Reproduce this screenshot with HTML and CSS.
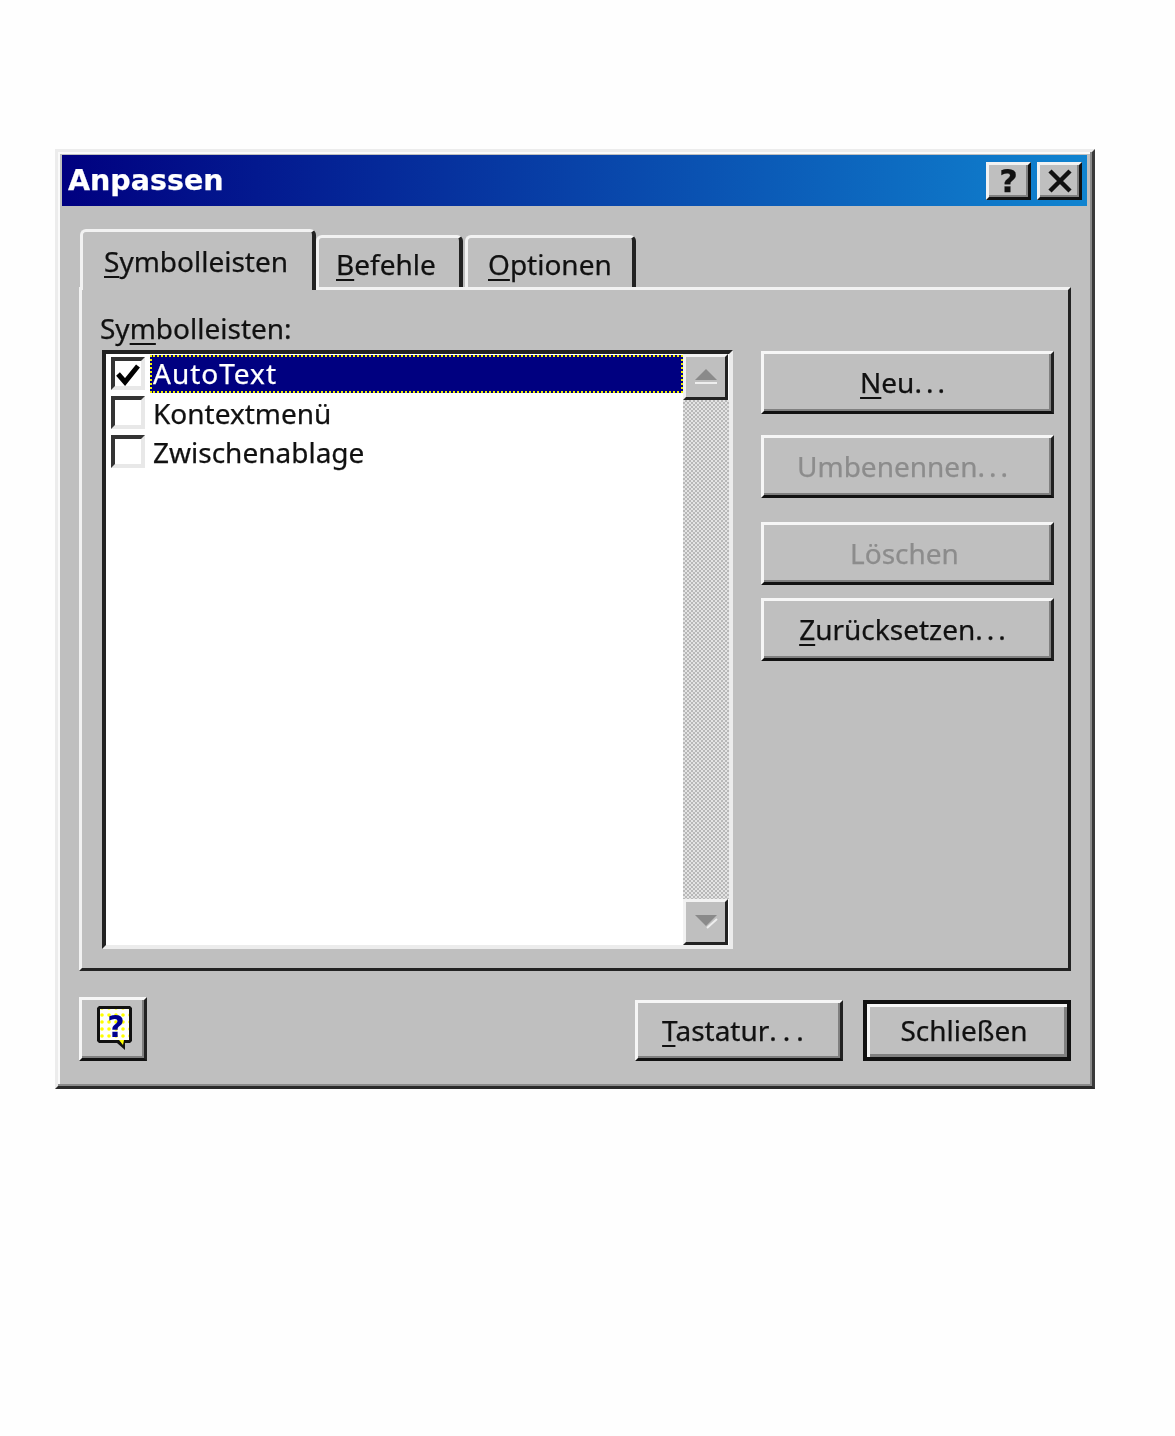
FILE: index.html
```html
<!DOCTYPE html>
<html lang="de">
<head>
<meta charset="utf-8">
<title>Anpassen</title>
<link rel="stylesheet" href="styles.css">
</head>
<body>
<div class="dialog">
  <header class="titlebar">
    <span class="title">Anpassen</span>
    <div class="caption-buttons">
      <button class="caption-btn help-glyph">?</button>
      <button class="caption-btn close-btn">
        <svg width="28" height="24" viewBox="0 0 28 24"><path d="M4 2 L24 22 M24 2 L4 22" stroke="#111" stroke-width="4.5" fill="none"/></svg>
      </button>
    </div>
  </header>
  <div class="content">
    <nav class="tabs">
      <div class="tab tab-active"><span><u>S</u>ymbolleisten</span></div>
      <div class="tab tab-befehle"><span><u>B</u>efehle</span></div>
      <div class="tab tab-optionen"><span><u>O</u>ptionen</span></div>
    </nav>
    <section class="panel">
      <div class="list-col">
        <label class="list-label">Sy<u>m</u>bolleisten:</label>
        <div class="listbox">
          <div class="items">
            <div class="item">
              <span class="check">
                <svg width="26" height="24" viewBox="0 0 26 24"><path d="M3 12 L10 20 L23 4" stroke="#000" stroke-width="5" fill="none"/></svg>
              </span>
              <span class="item-text selected">AutoText</span>
            </div>
            <div class="item"><span class="check"></span><span class="item-text">Kontextmenü</span></div>
            <div class="item"><span class="check"></span><span class="item-text">Zwischenablage</span></div>
          </div>
          <div class="scrollbar">
            <div class="scroll-btn">
              <svg width="30" height="20" viewBox="0 0 30 20"><path d="M15 2 L26 13 H4 Z" fill="#8a8a8a"/><path d="M4 16 H26" stroke="#eee" stroke-width="2"/></svg>
            </div>
            <div class="scroll-track"></div>
            <div class="scroll-btn">
              <svg width="30" height="20" viewBox="0 0 30 20"><path d="M4 3 H26 L15 14 Z" fill="#8a8a8a"/><path d="M16 16 L26 7" stroke="#eee" stroke-width="2"/></svg>
            </div>
          </div>
        </div>
      </div>
      <div class="side-buttons">
        <button class="btn side-neu"><u>N</u>eu<span class="dots">...</span></button>
        <button class="btn side-umb" disabled>Umbenennen<span class="dots">...</span></button>
        <button class="btn side-los" disabled>Löschen</button>
        <button class="btn side-zur"><u>Z</u>urücksetzen<span class="dots">...</span></button>
      </div>
    </section>
    <footer class="footer">
      <button class="btn help-btn">
        <svg width="42" height="48" viewBox="0 0 42 48">
          <defs>
            <pattern id="helpdots" width="7" height="7" patternUnits="userSpaceOnUse">
              <rect width="7" height="7" fill="#ffffff"/>
              <circle cx="3" cy="3" r="1.8" fill="#ffff00"/>
            </pattern>
          </defs>
          <path d="M7 1 H38 L40 3 V36 L38 38 H33 L33 45 L25 38 H7 L5 36 V3 Z" fill="#111"/>
          <rect x="8" y="4" width="29" height="31" fill="url(#helpdots)"/>
          <path d="M27 35 H32 L31 40 Z" fill="#ffff00"/>
          <text x="24" y="32" class="help-q">?</text>
        </svg>
      </button>
      <button class="btn foot-btn tastatur"><u>T</u>astatur<span class="dots wide">...</span></button>
      <button class="btn foot-btn default-btn">Schließen</button>
    </footer>
  </div>
</div>
</body>
</html>
```
FILE: styles.css
```css
* { box-sizing: border-box; }
html, body { margin: 0; padding: 0; }
body {
  background: #fefefe;
  padding: 149px 0 0 55px;
  font-family: "Noto Sans", "Liberation Sans", sans-serif;
  font-size: 28px;
  color: #111;
  -webkit-text-stroke: 0.25px currentColor;
}
u { text-underline-offset: 4px; text-decoration-thickness: 2px; }
.dots { letter-spacing: 4px; }
.dots.wide { letter-spacing: 6px; }
.dialog {
  width: 1040px;
  height: 940px;
  background: #bfbfbf;
  border: 3px solid;
  border-color: #ececec #3a3a3a #2a2a2a #ececec;
  padding: 3px 5px 0 4px;
  box-shadow: inset -2px -2px 0 #8a8a8a, inset 2px 2px 0 #fafafa;
  filter: blur(0.6px);
}
.titlebar {
  height: 51px;
  background: linear-gradient(90deg, #000080 0%, #1084d0 100%);
  display: flex;
  align-items: center;
  justify-content: space-between;
  padding: 0 5px 0 6px;
}
.title {
  color: #fff;
  font-family: "DejaVu Sans", sans-serif;
  font-weight: 700;
  font-size: 28.5px;
  line-height: 51px;
}
.caption-buttons { display: flex; gap: 6px; }
.caption-btn {
  width: 45px;
  height: 38px;
  padding: 0;
  background: #bfbfbf;
  border: 3px solid;
  border-color: #f2f2f2 #111 #111 #f2f2f2;
  box-shadow: inset -2px -2px 0 #808080;
  display: flex;
  align-items: center;
  justify-content: center;
}
.help-glyph {
  font-family: "DejaVu Sans", sans-serif;
  font-weight: 700;
  font-size: 32px;
  line-height: 1;
  color: #111;
}
.content { padding: 0 16px 0 17px; }
.tabs {
  height: 81px;
  display: flex;
  align-items: flex-end;
  padding-left: 1px;
}
.tab {
  height: 52px;
  background: #bfbfbf;
  display: flex;
  align-items: center;
  border-top: 3px solid #f2f2f2;
  border-left: 3px solid #f2f2f2;
  border-right: 4px solid #222;
  border-radius: 6px 6px 0 0;
}
.tab-active {
  width: 236px;
  height: 61px;
  margin-bottom: -3px;
  padding-left: 21px;
  position: relative;
  z-index: 1;
}
.tab-befehle { width: 147px; padding-left: 17px; padding-top: 3px; }
.tab-optionen { width: 171px; margin-left: 2px; padding-left: 20px; padding-top: 3px; }
.panel {
  height: 684px;
  border: 3px solid;
  border-color: #f2f2f2 #222 #222 #f2f2f2;
  padding: 20px 0 0 20px;
  display: flex;
  gap: 28px;
}
.list-col { width: 631px; }
.list-label { display: block; height: 40px; line-height: 37px; margin-left: -2px; }
.listbox {
  height: 599px;
  display: flex;
  background: #fff;
  border: 4px solid;
  border-color: #222 #ececec #ececec #222;
}
.items { flex: 1; padding: 0 0 0 4px; }
.item { height: 39px; display: flex; align-items: center; gap: 5px; }
.check {
  width: 34px;
  height: 33px;
  margin-left: 1px;
  flex: none;
  background: #fff;
  border: 4px solid;
  border-color: #333 #e8e8e8 #e8e8e8 #333;
  display: flex;
  align-items: center;
  justify-content: center;
}
.item-text { line-height: 39px; padding: 2px 3px 0; }
.selected {
  flex: 1;
  height: 38px;
  line-height: 36px;
  padding: 0 3px;
  background: #000080;
  color: #fff;
  letter-spacing: 1px;
  outline: 2px dotted #f0f000;
  outline-offset: -2px;
}
.scrollbar { width: 46px; flex: none; display: flex; flex-direction: column; }
.scroll-btn {
  height: 46px;
  flex: none;
  background: #bfbfbf;
  border: 3px solid;
  border-color: #f2f2f2 #222 #222 #f2f2f2;
  margin-right: 1px;
  display: flex;
  align-items: center;
  justify-content: center;
}
.scroll-track {
  flex: 1;
  background-color: #fff;
  background-image: repeating-conic-gradient(#b8b8b8 0 25%, #e4e4e4 0 50%);
  background-size: 4px 4px;
}
.side-buttons { width: 293px; display: flex; flex-direction: column; padding-top: 41px; }
.btn {
  background: #bfbfbf;
  border: 3px solid;
  border-color: #f6f6f6 #222 #111 #f6f6f6;
  box-shadow: inset -2px -2px 0 #808080;
  font: inherit;
  color: #111;
  padding: 0 6px 1px 0;
  height: 63px;
}
.btn:disabled { color: #8c8c8c; }
.side-umb { margin-top: 21px; }
.side-los { margin-top: 24px; }
.side-zur { margin-top: 13px; }
.footer { display: flex; align-items: flex-start; gap: 20px; padding-top: 26px; }
.help-btn {
  width: 68px;
  height: 64px;
  margin-right: auto;
  padding: 0;
  display: flex;
  align-items: center;
  justify-content: center;
}
.help-q {
  font-family: "DejaVu Sans", sans-serif;
  font-weight: 700;
  font-size: 30px;
  fill: #000090;
  text-anchor: middle;
}
.foot-btn { width: 208px; height: 61px; margin-top: 3px; }
.default-btn { border: 4px solid #111; box-shadow: inset 3px 3px 0 #f6f6f6, inset -3px -3px 0 #808080; }
```
